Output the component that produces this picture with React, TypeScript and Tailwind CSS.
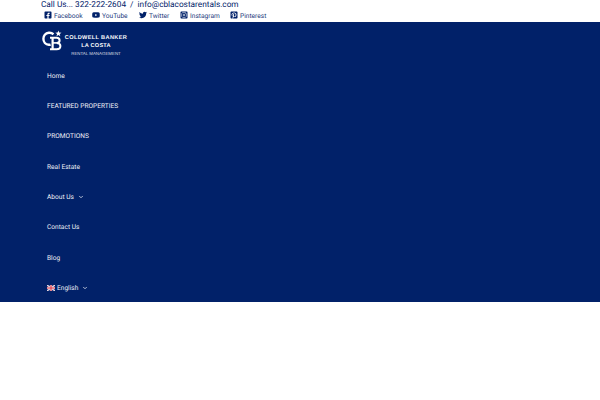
import { ChevronDown } from "lucide-react";
import { FaFacebookSquare, FaYoutube, FaTwitter, FaInstagramSquare, FaPinterestSquare } from "react-icons/fa";

const social = [
  { label: "Facebook", icon: FaFacebookSquare, cls: "w-[48px] ml-[3px]" },
  { label: "YouTube", icon: FaYoutube, cls: "w-[47px]" },
  { label: "Twitter", icon: FaTwitter, cls: "w-[41px]" },
  { label: "Instagram", icon: FaInstagramSquare, cls: "w-[50px]" },
  { label: "Pinterest", icon: FaPinterestSquare, cls: "w-[50px]" },
];

const menu = [
  { label: "Home" },
  { label: "FEATURED PROPERTIES" },
  { label: "PROMOTIONS" },
  { label: "Real Estate" },
  { label: "About Us", caret: true },
  { label: "Contact Us" },
  { label: "Blog" },
  { label: "English", caret: true, flag: true },
];

function Flag() {
  return (
    <svg width="8" height="6" viewBox="0 0 16 12" className="mr-[2px] shrink-0">
      <rect width="16" height="12" fill="#2b3f86" />
      <path d="M0 0L16 12M16 0L0 12" stroke="#f3dfe0" strokeWidth="2.5" />
      <path d="M8 0V12M0 6H16" stroke="#f3dfe0" strokeWidth="4" />
      <path d="M8 0V12M0 6H16" stroke="#d8354a" strokeWidth="2.2" />
    </svg>
  );
}

function Logo() {
  return (
    <svg width="22" height="23" viewBox="0 0 22 23" className="shrink-0">
      <path d="M11.5 4.2C10 3 8.4 2.6 6.8 2.8C3.4 3.2 1.4 5.8 1.4 8.8C1.4 12 3.6 14.6 6.8 14.8C7.4 14.8 8 14.8 8.6 14.6" fill="none" stroke="#fff" strokeWidth="2.4" />
      <path d="M8 7.8H14.6C16.6 7.8 17.6 9 17.6 10.4C17.6 11.8 16.6 12.8 14.8 12.9C17 13 18.4 14.2 18.4 16C18.4 18 17 19.2 14.6 19.2H8" fill="none" stroke="#fff" strokeWidth="2" />
      <path d="M10.6 7.8V19.2" stroke="#fff" strokeWidth="2.2" />
      <path d="M10.6 12.9H15" stroke="#fff" strokeWidth="1.6" />
      <path d="M16.4 0.4L17.2 2.6L19.5 2.7L17.7 4.1L18.3 6.3L16.4 5L14.5 6.3L15.1 4.1L13.3 2.7L15.6 2.6Z" fill="#fff" />
    </svg>
  );
}

export default function App() {
  return (
    <div className="font-['Roboto',sans-serif] [text-rendering:geometricPrecision] antialiased bg-white min-h-[400px]">
      <div className="h-[22px] pl-[41px] text-[#012169]">
        <div className="h-[10px] pt-[1px] flex items-center text-[8.25px] leading-none whitespace-pre">
          Call Us... 322-222-2604  /  info@cblacostarentals.com
        </div>
        <div className="flex items-center h-[12px] text-[6.6px] leading-none">
          {social.map((s) => (
            <div key={s.label} className={`flex items-center shrink-0 ${s.cls}`}>
              <s.icon size={8} className="mr-[2px] -mt-[3px] shrink-0" />
              <span className="mt-[1px] text-[#1b3a7c]">{s.label}</span>
            </div>
          ))}
        </div>
      </div>
      <div className="h-[280px] bg-[#012169]">
        <div className="pl-[42px] pt-[8px] h-[39px] flex items-start">
          <Logo />
          <div className="w-[64px] text-center text-white font-['Liberation_Sans',sans-serif] leading-none">
            <div className="text-[5.6px] font-bold tracking-[0.35px] mt-[5.5px] whitespace-nowrap">COLDWELL BANKER</div>
            <div className="text-[5.6px] font-bold mt-[2.5px] tracking-[0.2px]">LA COSTA</div>
            <div className="text-[4.4px] mt-[2.5px] opacity-80">RENTAL MANAGEMENT</div>
          </div>
        </div>
        <ul className="pl-[47px] text-[#eef0f6] text-[6.6px] leading-none">
          {menu.map((m) => (
            <li key={m.label} className="h-[30.3px] flex items-center">
              {m.flag && <Flag />}
              <span>{m.label}</span>
              {m.caret && <ChevronDown size={6} strokeWidth={3} className="ml-[4px]" />}
            </li>
          ))}
        </ul>
      </div>
    </div>
  );
}
